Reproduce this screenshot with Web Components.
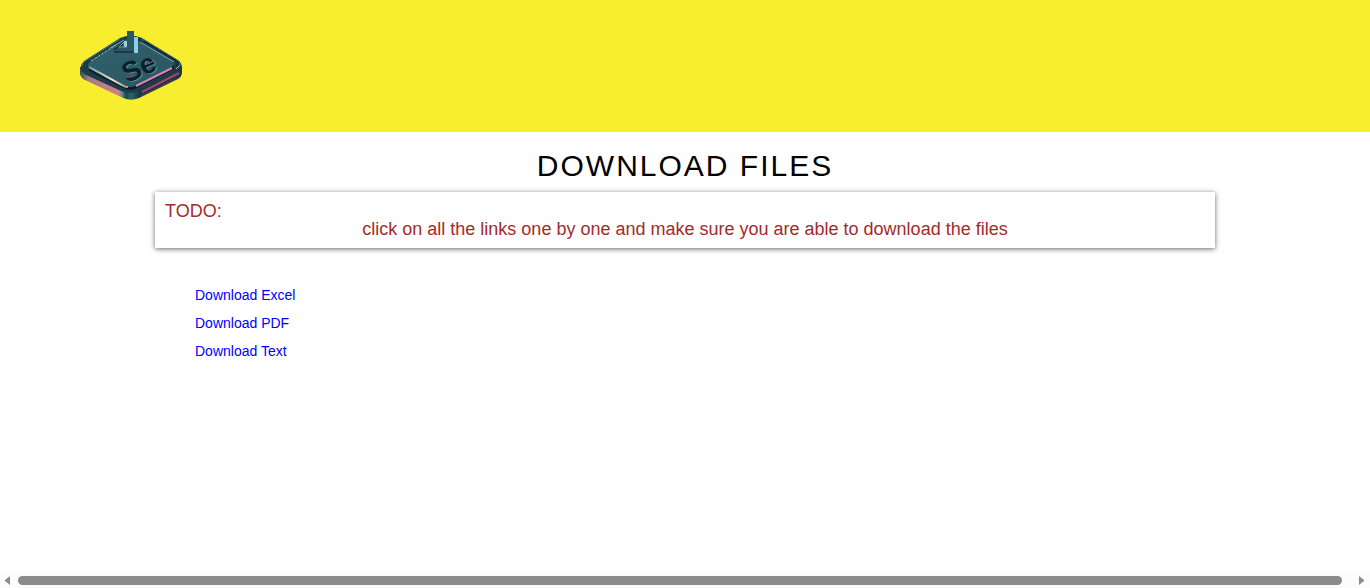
<!DOCTYPE html>
<html lang="en">
<head>
<meta charset="utf-8">
<title>Download Files</title>
<style>
  body { margin: 0; background: #fff; font-family: "Liberation Sans", Arial, sans-serif; }
</style>
</head>
<body>
<download-page></download-page>
<script>
const define = (name, html) => {
  customElements.define(name, class extends HTMLElement {
    constructor() {
      super();
      this.attachShadow({ mode: "open" }).innerHTML = html;
    }
  });
};

define("se-logo", `
  <style>
    :host { display: block; width: 102px; }
    svg { display: block; width: 102px; height: 72px; }
    text { font: bold 28px "Liberation Sans", Arial, sans-serif; }
  </style>
  <svg viewBox="10 10 102 72" role="img" aria-label="Selenium">
    <defs>
      <linearGradient id="side" x1="0" x2="1" y1="0" y2="0">
        <stop offset="0" stop-color="#315059"/><stop offset=".08" stop-color="#a77a83"/>
        <stop offset=".38" stop-color="#cf828b"/><stop offset=".41" stop-color="#4f9991"/>
        <stop offset=".45" stop-color="#1b4650"/><stop offset=".5" stop-color="#30636b"/>
        <stop offset=".58" stop-color="#193942"/><stop offset="1" stop-color="#1c3943"/>
      </linearGradient>
      <linearGradient id="top" x1="0" x2="1" y1="0" y2="1">
        <stop offset="0" stop-color="#32626c"/><stop offset="1" stop-color="#285663"/>
      </linearGradient>
      <linearGradient id="edge" x1="0" x2="1" y1="0" y2="0">
        <stop offset="0" stop-color="#7697a0"/><stop offset=".6" stop-color="#eee1ce"/><stop offset="1" stop-color="#ad9d97"/>
      </linearGradient>
    </defs>
    <path d="M10 47V54Q11 58 15 60L51 77Q60 82 69 78L108 59Q112 57 112 52V46Z" fill="url(#side)"/>
    <path d="M14 41 50 18Q61 13 72 18L108 40Q115 46 109 51L69 71Q60 75 51 71L14 54Q7 48 14 41Z" fill="#1c3d48"/>
    <path d="M12 46Q12 43 15 41L50 19M72 19 107 40Q111 43 110 47" fill="none" stroke="#497a83"/>
    <path d="M19 43 53 21Q60 17 68 21L104 42V49L67 68Q60 72 53 68L19 51Z" fill="#0c1c29"/>
    <path d="M20 42 53 21Q60 17 68 21L102 41Q106 44 102 47L67 65Q60 69 53 65L20 49Q16 45 20 42Z" fill="url(#top)"/>
    <path d="M21 41 46 25" fill="none" stroke="#a1c3c5" stroke-dasharray="3 1"/>
    <path d="M70 22 104 42" fill="none" stroke="#84adb1"/>
    <path d="M74 21 107 41Q110 43 106 46" fill="none" stroke="#0b1822"/>
    <path d="M19 47 52 65Q55 67 58 67" fill="none" stroke="url(#edge)" stroke-width="2"/>
    <path d="M66 66 102 48" fill="none" stroke="#dd83b5" stroke-width="2"/>
    <path d="M72 72 109 53" fill="none" stroke="#a94168" stroke-width="2"/>
    <path d="M71 76 104 60" fill="none" stroke="#663951"/>
    <path d="M106 49 109 46" fill="none" stroke="#a7b9c8"/>
    <path d="M43 30 51 24 54 21V28Z" fill="#17202d"/>
    <path d="M40 28 54 20M49 27 54 22V27" fill="none" stroke="#75abb0"/>
    <path d="M54 21H57V29H54Z" fill="#99d1df"/>
    <path d="M64 17H68V33H64Z" fill="#90cce3"/>
    <path d="M57 11H64V32H44L48 27H57Z" fill="#285865"/>
    <path d="M44 32H64" stroke="#101b27"/>
    <path d="M49 27H57" stroke="#6d9fab"/>
    <g transform="rotate(-24 69 46)">
      <text x="52" y="58" fill="#538c96" aria-hidden="true">Se</text>
      <text x="51" y="57" fill="#101e29">Se</text>
    </g>
    <path d="M56 57Q61 58 63 54" fill="none" stroke="#a75489"/>
    <path d="M78 44 83 41" fill="none" stroke="#b35d94"/>
  </svg>`);

define("site-header", `
  <style>
    :host { display: block; background: #f8ee2f; }
    header { display: flex; padding: 30px 80px; }
    a { display: block; }
  </style>
  <header><a href="#" aria-label="Home"><se-logo></se-logo></a></header>`);

define("todo-card", `
  <style>
    :host { display: block; box-sizing: border-box; padding: 10px; background: #fff;
      box-shadow: 0 1px 5px rgba(0,0,0,.6); color: brown; font-size: 18px; line-height: 18px; }
    p { margin: 0; text-align: center; }
  </style>
  <div>TODO:</div>
  <p><slot></slot></p>`);

define("download-list", `
  <style>
    :host { display: block; }
    ul { list-style: none; margin: 0; padding: 0 0 0 40px; font-size: 14px; line-height: 28px; }
    a { color: #00f; text-decoration: none; }
  </style>
  <ul>
    <li><a href="#excel">Download Excel</a></li>
    <li><a href="#pdf">Download PDF</a></li>
    <li><a href="#text">Download Text</a></li>
  </ul>`);

define("scroll-strip", `
  <style>
    :host { display: flex; align-items: center; height: 15px; padding: 0 6px 0 5px; gap: 8px; background: #fcfcfc; }
    svg { display: block; flex: none; width: 5px; height: 9px; fill: #8b8b8b; }
    div { flex: 1; height: 9px; margin-right: 9px; border-radius: 5px; background: #8b8b8b; }
  </style>
  <svg viewBox="0 0 5 9" aria-hidden="true"><path d="M5 0V9L0 5V4Z"/></svg>
  <div></div>
  <svg viewBox="0 0 5 9" aria-hidden="true"><path d="M0 0V9L5 5V4Z"/></svg>`);

define("download-page", `
  <style>
    :host { display: flex; flex-direction: column; min-height: 100vh; }
    main { flex: 1; box-sizing: border-box; width: 100%; max-width: 1060px; margin: 0 auto; padding-top: 16px; }
    h1 { margin: 0 0 8px; font-size: 30px; line-height: 36px; font-weight: 400; letter-spacing: 2px; text-align: center; }
    download-list { margin-top: 33px; }
  </style>
  <site-header></site-header>
  <main>
    <h1>DOWNLOAD FILES</h1>
    <todo-card>click on all the links one by one and make sure you are able to download the files</todo-card>
    <download-list></download-list>
  </main>
  <scroll-strip></scroll-strip>`);
</script>
</body>
</html>
